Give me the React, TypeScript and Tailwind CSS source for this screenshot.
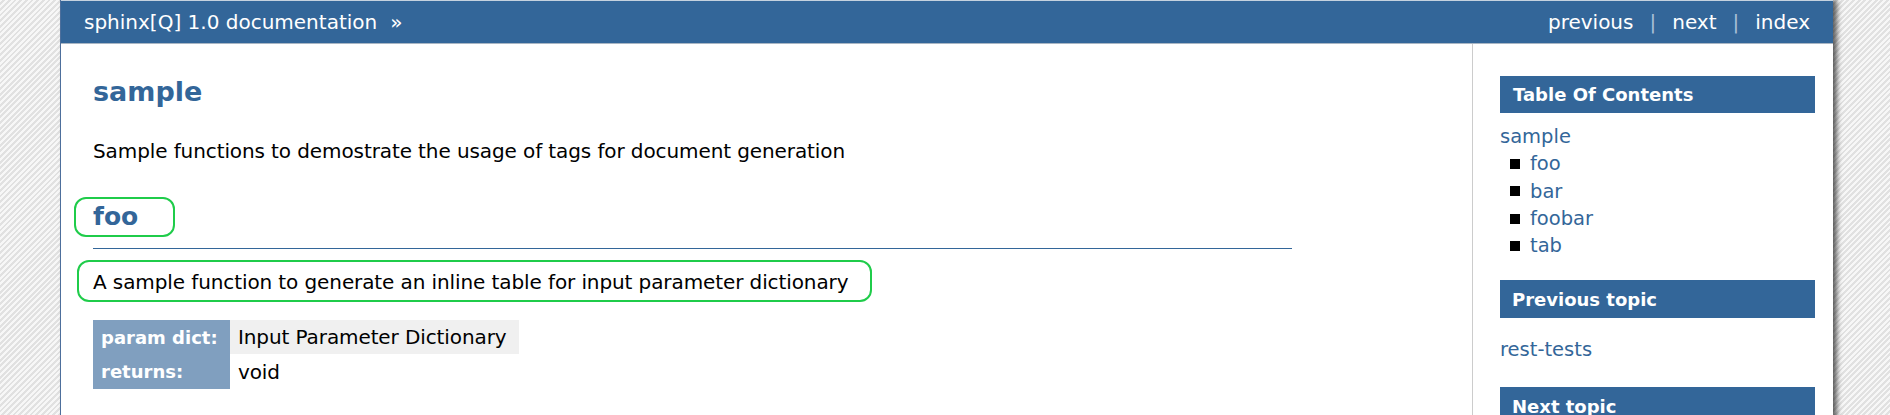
export default function App() {
  const tocItems = ["foo", "bar", "foobar", "tab"];
  return (
    <div className="min-h-screen w-full bg-[repeating-linear-gradient(135deg,#f7f7f7_0px,#f7f7f7_2px,#e1e1e1_2px,#e1e1e1_4px)] pl-[60px] pr-[57px] font-['DejaVu_Sans',sans-serif]">
      <div className="min-h-[415px] bg-white border-l border-[#4d6f9c] shadow-[4px_0_5px_rgba(0,0,0,0.6)]">
        <header className="h-[44px] bg-[#336699] border-t border-t-[#c5d2df] border-b border-b-[#a9b6c4] flex items-center justify-between pl-[23px] pr-[23px] text-white text-[20px]">
          <div>
            sphinx[Q] 1.0 documentation<span className="ml-[13px]">»</span>
          </div>
          <nav className="flex items-center">
            <span>previous</span>
            <span className="mx-[16px] text-[#a9c0d8]">|</span>
            <span>next</span>
            <span className="mx-[16px] text-[#a9c0d8]">|</span>
            <span>index</span>
          </nav>
        </header>
        <div className="flex">
          <main className="flex-1 pl-[32px]">
            <div className="w-[1199px]">
              <h1 className="mt-[32px] text-[27px] leading-[32px] font-bold text-[#336699]">sample</h1>
              <p className="mt-[31px] text-[20px] leading-[24px] tracking-[-0.1px] text-black">
                Sample functions to demostrate the usage of tags for document generation
              </p>
              <h2 className="mt-[38px] pb-[15px] border-b border-[#336699]">
                <span className="relative inline-block text-[25px] leading-[32px] font-bold text-[#336699]">
                  foo
                  <span className="absolute -left-[19px] -right-[37px] -top-[4px] -bottom-[4px] border-2 border-[#1fcc4a] rounded-[12px]" />
                </span>
              </h2>
              <p className="mt-[21px] text-[20px] leading-[24px] tracking-[-0.1px] text-black">
                <span className="relative inline-block">
                  A sample function to generate an inline table for input parameter dictionary
                  <span className="absolute -left-[16px] -right-[24px] -top-[10px] -bottom-[8px] border-2 border-[#1fcc4a] rounded-[12px]" />
                </span>
              </p>
              <table className="mt-[26px] border-collapse text-[20px] tracking-[-0.1px]">
                <tbody>
                  <tr className="h-[34px]">
                    <th className="w-[137px] bg-[#809fbf] text-white font-bold text-[18px] tracking-normal text-left pl-[8px]">
                      param dict:
                    </th>
                    <td className="bg-[#f0f0f0] pl-[8px] pr-[12px] text-black">Input Parameter Dictionary</td>
                  </tr>
                  <tr className="h-[35px]">
                    <th className="w-[137px] bg-[#809fbf] text-white font-bold text-[18px] tracking-normal text-left pl-[8px]">
                      returns:
                    </th>
                    <td className="pl-[8px] pr-[12px] text-black">void</td>
                  </tr>
                </tbody>
              </table>
            </div>
          </main>
          <aside className="w-[361px] min-h-[371px] border-l border-[#cccccc] pl-[27px] pr-[18px]">
            <h3 className="mt-[32px] h-[37px] bg-[#336699] text-white font-bold text-[18px] pl-[13px] flex items-center">
              Table Of Contents
            </h3>
            <ul className="mt-[10px] text-[19.5px] leading-[27.3px] text-[#336699]">
              <li>
                sample
                <ul className="pl-[10px]">
                  {tocItems.map((t) => (
                    <li key={t} className="flex items-center">
                      <span className="w-[10px] h-[10px] bg-black mr-[10px]" />
                      <span>{t}</span>
                    </li>
                  ))}
                </ul>
              </li>
            </ul>
            <h3 className="mt-[21px] h-[38px] bg-[#336699] text-white font-bold text-[18px] pl-[12px] flex items-center">
              Previous topic
            </h3>
            <p className="mt-[18px] text-[19.5px] leading-[27px] text-[#336699]">rest-tests</p>
            <h3 className="mt-[24px] h-[38px] bg-[#336699] text-white font-bold text-[18px] pl-[12px] flex items-center">
              Next topic
            </h3>
          </aside>
        </div>
      </div>
    </div>
  );
}
